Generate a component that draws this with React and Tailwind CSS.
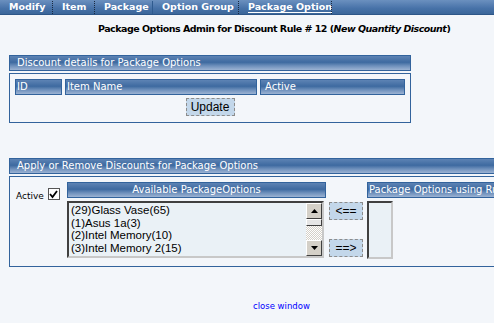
import React from "react";

const NAV = [
  { label: "Modify", w: "w-[52px]", sep: "dotted" },
  { label: "Item", w: "w-[41px]", sep: "dotted" },
  { label: "Package", w: "w-[57px]", sep: "solid" },
  { label: "Option Group", w: "w-[85px]", sep: "dotted" },
  { label: "Package Option", w: "w-[92px]", sep: "dotted", active: true },
];

const OPTIONS = [
  "(29)Glass Vase(65)",
  "(1)Asus 1a(3)",
  "(2)Intel Memory(10)",
  "(3)Intel Memory 2(15)",
];

const barBg =
  "bg-[linear-gradient(to_bottom,#5d83b4_0%,#3e6aa0_45%,#6d8fbb_70%,#9cb3d3_100%)]";

function Bar({ children, className = "" }) {
  return (
    <div
      className={`h-[16px] border border-[#32639c] ${barBg} text-white text-[10px] leading-[14px] whitespace-nowrap overflow-hidden ${className}`}
    >
      {children}
    </div>
  );
}

function Btn({ children, className = "" }) {
  return (
    <button
      className={`bg-[#c3d7ea] border border-dashed border-[#8c8c8c] text-black text-[12px] leading-none ${className}`}
      style={{ fontFamily: '"Liberation Sans", Arial, sans-serif' }}
    >
      {children}
    </button>
  );
}

export default function App() {
  return (
    <div
      className="w-[494px] h-[323px] overflow-hidden bg-[#f3f6fa] relative"
      style={{ fontFamily: '"DejaVu Sans", Verdana, sans-serif' }}
    >
      {/* top nav */}
      <div className="h-[15px] flex bg-[linear-gradient(to_bottom,#6b90bf,#4772a8_60%,#3b6699)] border-b border-[#2d5688]">
        {NAV.map((n) => (
          <div key={n.label} className="flex">
            <div
              className={`${n.w} pl-[9px] text-white font-bold text-[9.5px] leading-[14px] whitespace-nowrap`}
            >
              <span className={n.active ? "underline underline-offset-2" : ""}>{n.label}</span>
            </div>
            <div
              className={`w-0 h-[13px] mt-[1px] border-l ${
                n.sep === "dotted" ? "border-dotted border-[#1a2a40]" : "border-solid border-[#2f5b8f]"
              }`}
            />
          </div>
        ))}
      </div>

      {/* title */}
      <div className="pl-[98px] mt-[8px] text-[9.5px] leading-[12px] tracking-[-0.5px] font-bold text-black whitespace-nowrap">
        Package Options Admin for Discount Rule # 12 (<i>New Quantity Discount</i>)
      </div>

      {/* section 1 */}
      <div className="ml-[9px] w-[402px] mt-[20px]">
        <Bar className="pl-[7px]">Discount details for Package Options</Bar>
        <div className="mt-[2px] h-[50px] border border-[#32639c] px-[5px] pt-[5px]">
          <div className="flex gap-[3px]">
            <Bar className="w-[47px] pl-[1px]">ID</Bar>
            <Bar className="w-[192px] pl-[1px]">Item Name</Bar>
            <Bar className="w-[145px] pl-[4px]">Active</Bar>
          </div>
          <div className="flex justify-center mt-[3px]">
            <Btn className="w-[49px] h-[18px]">Update</Btn>
          </div>
        </div>
      </div>

      {/* section 2 */}
      <div className="ml-[9px] w-[600px] mt-[35px]">
        <Bar className="pl-[7px]">Apply or Remove Discounts for Package Options</Bar>
        <div className="mt-[2px] h-[91px] border border-[#32639c] pt-[5px] flex">
          <div className="w-[57px] pl-[6px] pt-[6px] flex items-start">
            <span className="text-[9px] text-black mt-[2px]">Active</span>
            <span className="ml-[4px] w-[12px] h-[12px] border border-[#555] bg-white flex items-center justify-center">
              <svg width="9" height="9" viewBox="0 0 9 9">
                <path d="M1 4 L3.5 7 L8 1" stroke="#000" strokeWidth="1.8" fill="none" />
              </svg>
            </span>
          </div>
          <div className="w-[259px]">
            <Bar className="text-center">Available PackageOptions</Bar>
            <div className="mt-[3px] w-[257px] h-[57px] border-2 border-t-[#404040] border-l-[#404040] border-r-[#c8c8c8] border-b-[#c8c8c8] bg-[#eaf1f6] flex">
              <div className="flex-1 pl-[2px] pt-[1px]">
                {OPTIONS.map((o) => (
                  <div
                    key={o}
                    className="text-[11.5px] leading-[12.7px] text-black whitespace-nowrap"
                    style={{ fontFamily: '"Liberation Sans", Arial, sans-serif' }}
                  >
                    {o}
                  </div>
                ))}
              </div>
              <div className="w-[16px] flex flex-col">
                <div className="h-[16px] bg-[#d4d0c8] border border-t-white border-l-white border-r-[#404040] border-b-[#404040] flex items-center justify-center">
                  <svg width="7" height="4" viewBox="0 0 7 4"><path d="M0 4 L3.5 0 L7 4 Z" fill="#000" /></svg>
                </div>
                <div className="h-[7px] bg-[#e6e6e6] border border-t-white border-l-white border-r-[#404040] border-b-[#404040]" />
                <div className="flex-1 bg-[repeating-conic-gradient(#d4d0c8_0_25%,#ffffff_0_50%)] bg-[length:2px_2px]" />
                <div className="h-[16px] bg-[#d4d0c8] border border-t-white border-l-white border-r-[#404040] border-b-[#404040] flex items-center justify-center">
                  <svg width="7" height="4" viewBox="0 0 7 4"><path d="M0 0 L3.5 4 L7 0 Z" fill="#000" /></svg>
                </div>
              </div>
            </div>
          </div>
          <div className="w-[41px] pl-[3px] pt-[20px] flex flex-col gap-[19px]">
            <Btn className="w-[34px] h-[18px]">&lt;==</Btn>
            <Btn className="w-[34px] h-[18px]">==&gt;</Btn>
          </div>
          <div className="w-[200px]">
            <Bar className="pl-[1px]">Package Options using Rule</Bar>
            <div className="mt-[3px] w-[26px] h-[58px] border-2 border-t-[#404040] border-l-[#404040] border-r-[#c8c8c8] border-b-[#c8c8c8] bg-[#eaf1f6]" />
          </div>
        </div>
      </div>

      {/* footer link */}
      <div className="mt-[32px] pl-[253px] leading-[10px]">
        <a className="text-[8.5px] text-[#0000ff]" href="#">close window</a>
      </div>
    </div>
  );
}
